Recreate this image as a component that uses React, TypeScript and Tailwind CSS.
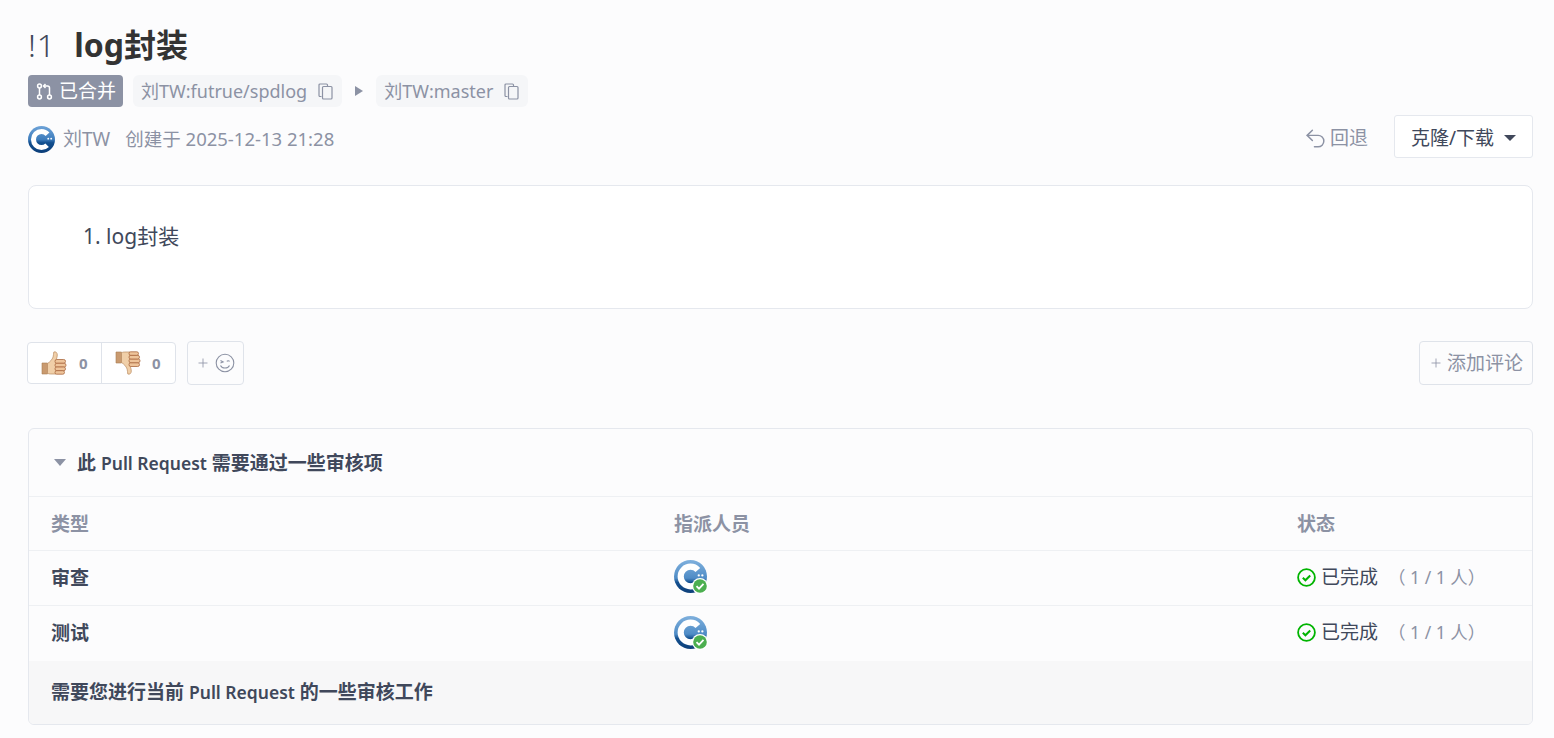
import React from 'react';
import { Undo2, Plus } from 'lucide-react';

const FONT = "font-['Noto_Sans','Noto_Sans_CJK_SC',sans-serif]";

const Avatar = ({ size = 27, soft = false }: { size?: number; soft?: boolean }) => (
  <svg width={size} height={size} viewBox="0 0 32 32" className="shrink-0">
    <defs>
      <linearGradient id="ring" x1="0" y1="0" x2="0" y2="1">
        <stop offset="0" stopColor="#6ea3d8" />
        <stop offset="0.5" stopColor="#3d7cbc" />
        <stop offset="0.62" stopColor="#124f8f" />
        <stop offset="1" stopColor="#0b3d78" />
      </linearGradient>
      <linearGradient id="ringSoft" x1="0" y1="0" x2="0" y2="1">
        <stop offset="0" stopColor="#7fb0dd" />
        <stop offset="0.55" stopColor="#4f8cc6" />
        <stop offset="0.68" stopColor="#14508f" />
        <stop offset="1" stopColor="#0d3f79" />
      </linearGradient>
    </defs>
    <circle cx="16" cy="16" r="16" fill={soft ? 'url(#ringSoft)' : 'url(#ring)'} />
    <circle cx="16" cy="16" r="9.500" fill="none" stroke="#fff" strokeWidth="6" strokeDasharray="45 15" strokeDashoffset="-7.500" />
    <circle cx="24" cy="15" r="1.100" fill="#fff" />
    <circle cx="27.500" cy="15" r="1.100" fill="#fff" />
  </svg>
);

const ReviewAvatar = () => (
  <div className="relative w-[34px] h-[34px]">
    <Avatar size={33} soft />
    <svg width="16" height="16" viewBox="0 0 16 16" className="absolute right-0 bottom-0">
      <circle cx="8" cy="8" r="8" fill="#fff" />
      <circle cx="8" cy="8" r="6.800" fill="#4caf50" />
      <path d="M4.500 8.100l2.500 2.500 4.500-4.700" fill="none" stroke="#fff" strokeWidth="1.800" />
    </svg>
  </div>
);

const MergeIcon = () => (
  <svg width="17" height="17" viewBox="0 0 17 17" fill="none" stroke="#fff" strokeWidth="1.500" className="shrink-0">
    <circle cx="3.500" cy="3" r="1.900" />
    <circle cx="3.500" cy="14" r="1.900" />
    <circle cx="13.500" cy="14" r="1.900" />
    <path d="M3.500 5v7M9.500 1L7.500 3l2 2M8 3h3.500a2 2 0 0 1 2 2v7" />
  </svg>
);

const CopyIcon = () => (
  <svg width="15" height="17" viewBox="0 0 15 17" fill="none" stroke="#8c92a4" strokeWidth="1.200" className="ml-[11px] mr-[1px] shrink-0">
    <path d="M3.500 13.500H2a1 1 0 0 1-1-1V2a1 1 0 0 1 1-1h6.500a1 1 0 0 1 1 1v1" />
    <rect x="4.500" y="3.500" width="9.500" height="12.500" rx="1" />
  </svg>
);

const ThumbUp = () => (
  <svg width="26" height="26" viewBox="0 0 26 26">
    <path d="M1 13h5.500v11H1z" fill="#c99a6f" stroke="#a97c52" strokeWidth=".6" />
    <path d="M6.500 13.500c2.400-1.500 4.600-3.800 5.600-6.500.5-1.600.3-3.200.7-5 2-.8 3.500.8 3.500 3 0 1.700-.6 3.200-1 4.500v14.500H9.500c-1.500 0-3-.5-3-1.500z" fill="#f0cfa8" stroke="#b98a5e" strokeWidth=".7" />
    <rect x="14" y="9.500" width="10.500" height="3.800" rx="1.800" fill="#eec49a" stroke="#a9683f" strokeWidth=".8" />
    <rect x="14" y="13.300" width="11" height="3.800" rx="1.800" fill="#eec49a" stroke="#a9683f" strokeWidth=".8" />
    <rect x="14" y="17" width="10.500" height="3.700" rx="1.800" fill="#eec49a" stroke="#a9683f" strokeWidth=".8" />
    <rect x="14" y="20.700" width="9.500" height="3.500" rx="1.700" fill="#eec49a" stroke="#a9683f" strokeWidth=".8" />
  </svg>
);

const ThumbDown = () => (
  <svg width="26" height="26" viewBox="0 0 26 26">
    <path d="M1 2h5.500v11H1z" fill="#c99a6f" stroke="#a97c52" strokeWidth=".6" />
    <path d="M6.500 12.500c2.400 1.500 4.600 3.800 5.600 6.500.5 1.600.3 3.200.7 5 2 .8 3.500-.8 3.500-3 0-1.700-.6-3.200-1-4.500V2H9.500c-1.500 0-3 .5-3 1.500z" fill="#f0cfa8" stroke="#b98a5e" strokeWidth=".7" />
    <rect x="14" y="12.700" width="10.500" height="3.800" rx="1.800" fill="#eec49a" stroke="#a9683f" strokeWidth=".8" />
    <rect x="14" y="8.900" width="11" height="3.800" rx="1.800" fill="#eec49a" stroke="#a9683f" strokeWidth=".8" />
    <rect x="14" y="5.300" width="10.500" height="3.700" rx="1.800" fill="#eec49a" stroke="#a9683f" strokeWidth=".8" />
    <rect x="14" y="1.800" width="9.500" height="3.500" rx="1.700" fill="#eec49a" stroke="#a9683f" strokeWidth=".8" />
  </svg>
);

const Wink = () => (
  <svg width="20" height="20" viewBox="0 0 20 20" fill="none" stroke="#8c92a4" strokeWidth="1.100">
    <circle cx="10" cy="10" r="8.800" />
    <path d="M5.500 7.600l2.600 1.300-2.600 1.100M11.800 8.400c.8-.9 2-.9 2.800 0M5.500 12.400c1.800 3.400 7.200 3.400 9 0" />
  </svg>
);

const Done = () => (
  <svg width="19" height="19" viewBox="0 0 19 19" fill="none" stroke="#00b400" className="shrink-0">
    <circle cx="9.500" cy="9.500" r="8.400" strokeWidth="1.800" />
    <path d="M5.800 9.800l2.600 2.500 4.800-4.800" strokeWidth="2" />
  </svg>
);

const BranchTag = ({ label }: { label: string }) => (
  <span className="flex items-center h-[32px] px-2 rounded-[6px] bg-[#f5f6f8] text-[#8c92a4] text-[18px]">
    {label}
    <CopyIcon />
  </span>
);

const Row = ({ name, line }: { name: string; line?: boolean }) => (
  <div className={`flex items-center h-[55px] ${line ? 'border-b border-[#eef0f3]' : ''}`}>
    <span className="w-[645px] pl-[22px] font-bold text-[#40485b] text-[19px]">{name}</span>
    <span className="w-[623px] pb-[2px] flex items-center"><ReviewAvatar /></span>
    <span className="flex items-center pb-[2px] text-[#40485b] text-[19px]">
      <Done />
      <span className="ml-[5px]">已完成</span>
      <span className="ml-[10px] text-[#8c92a4] text-[17.5px] whitespace-pre">（ 1 / 1 人）</span>
    </span>
  </div>
);

export default function App() {
  return (
    <div className={`${FONT} w-[1554px] h-[738px] overflow-hidden bg-[#fcfcfd] pl-[28px] pr-[21px]`}>
      {/* title */}
      <div className="flex items-center h-[32px] mt-[29px]">
        <span className="text-[32px] tracking-[1px] text-[#40485b] font-light">!1</span>
        <h1 className="ml-[18px] text-[32px] font-bold text-[#333]">log封装</h1>
      </div>

      {/* branches */}
      <div className="flex items-center mt-[14px]">
        <span className="flex items-center gap-[6px] h-[32px] pl-2 pr-[7px] rounded-[4px] bg-[#8c92a4] text-white text-[19px]">
          <MergeIcon />已合并
        </span>
        <span className="ml-[10px]"><BranchTag label="刘TW:futrue/spdlog" /></span>
        <span className="mx-[13px] w-0 h-0 border-y-[5px] border-y-transparent border-l-[8px] border-l-[#8c92a4]" />
        <BranchTag label="刘TW:master" />
      </div>

      {/* author */}
      <div className="flex items-center justify-between mt-[8px] h-[43px]">
        <div className="flex items-center mt-[5px] text-[#8c92a4] text-[18.5px]">
          <Avatar />
          <span className="ml-[8px] text-[19px]">刘TW</span>
          <span className="ml-[15px]">创建于 2025-12-13 21:28</span>
        </div>
        <div className="flex items-center">
          <span className="flex items-center gap-[2px] pt-[3px] text-[#8c92a4] text-[19px]">
            <Undo2 size={25} strokeWidth={1.400} />回退
          </span>
          <button className="ml-[26px] flex items-center h-[43px] px-4 pt-[3px] rounded-[3px] border border-[#e5e8ee] bg-white text-[#40485b] text-[19px]">
            克隆/下载
            <span className="ml-[10px] w-0 h-0 border-x-[6px] border-x-transparent border-t-[6px] border-t-[#40485b]" />
          </button>
        </div>
      </div>

      {/* description */}
      <div className="mt-[27px] h-[124px] rounded-[8px] border border-[#e5e8ee] bg-white pl-[54px] pt-[35px] text-[#40485b] text-[21px] leading-[30px]">
        1. log封装
      </div>

      {/* reactions */}
      <div className="flex items-center justify-between mt-[32px] h-[44px]">
        <div className="flex items-center -ml-[1px]">
          <div className="flex h-[42px] rounded-[4px] border border-[#dfe3ea] bg-white text-[#8c92a4] font-bold text-[15px]">
            <span className="flex items-center w-[74px] pl-[13px] border-r border-[#dfe3ea]"><ThumbUp /><span className="ml-[12px]">0</span></span>
            <span className="flex items-center w-[73px] pl-[13px]"><ThumbDown /><span className="ml-[11px]">0</span></span>
          </div>
          <span className="ml-[11px] flex items-center justify-center gap-[5px] w-[57px] h-[44px] rounded-[4px] border border-[#dfe3ea] text-[#8c92a4]">
            <Plus size={14} strokeWidth={1.400} /><Wink />
          </span>
        </div>
        <span className="flex items-center justify-center gap-[4px] w-[114px] h-[44px] rounded-[4px] border border-[#dfe3ea] text-[#8c92a4] text-[19px]">
          <Plus size={14} strokeWidth={1.400} />添加评论
        </span>
      </div>

      {/* review items */}
      <div className="mt-[43px] rounded-[6px] border border-[#e5e8ee] overflow-hidden">
        <div className="flex items-center h-[68px] pl-[25px] border-b border-[#eef0f3] font-bold text-[#40485b] text-[19px]">
          <span className="w-0 h-0 border-x-[6px] border-x-transparent border-t-[7px] border-t-[#8c92a4]" />
          <span className="ml-[11px] pt-[2px]">此 <span className="text-[17.5px] font-semibold">Pull Request</span> 需要通过一些审核项</span>
        </div>
        <div className="flex items-center h-[54px] pt-[2px] border-b border-[#eef0f3] font-bold text-[#8c92a4] text-[19px]">
          <span className="w-[645px] pl-[22px]">类型</span>
          <span className="w-[623px]">指派人员</span>
          <span>状态</span>
        </div>
        <Row name="审查" line />
        <Row name="测试" />
        <div className="flex items-center h-[63px] pl-[22px] bg-[#f7f7f8] font-bold text-[#40485b] text-[19px]">
          <span>需要您进行当前 <span className="text-[17.5px] font-semibold">Pull Request</span> 的一些审核工作</span>
        </div>
      </div>
    </div>
  );
}
